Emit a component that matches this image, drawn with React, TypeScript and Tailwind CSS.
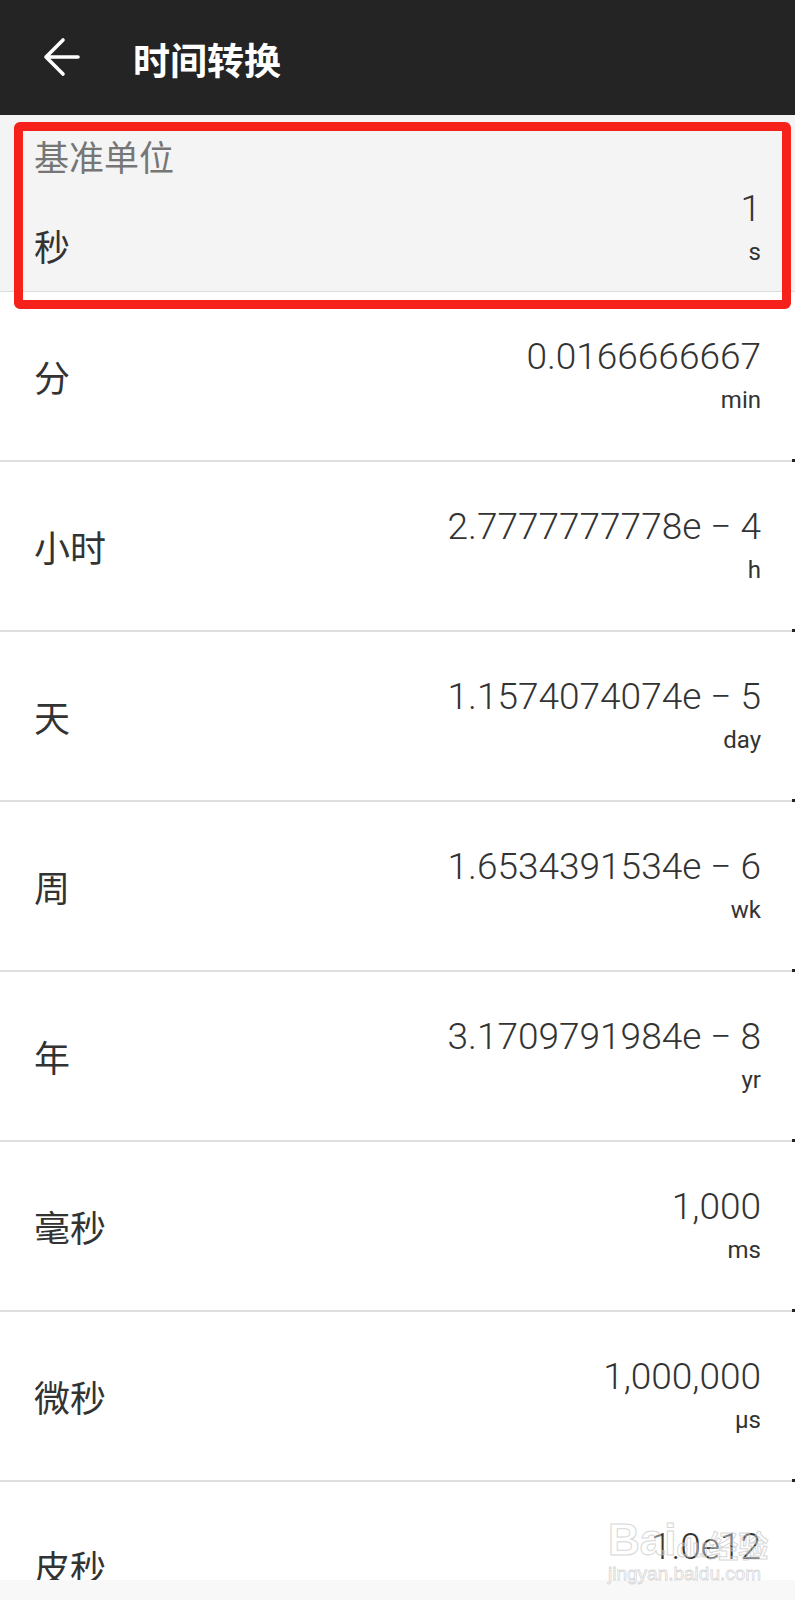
import React from "react";

const rows: { label: string; value: string; unit: string }[] = [
  { label: "分", value: "0.0166666667", unit: "min" },
  { label: "小时", value: "2.7777777778e − 4", unit: "h" },
  { label: "天", value: "1.1574074074e − 5", unit: "day" },
  { label: "周", value: "1.6534391534e − 6", unit: "wk" },
  { label: "年", value: "3.1709791984e − 8", unit: "yr" },
  { label: "毫秒", value: "1,000", unit: "ms" },
  { label: "微秒", value: "1,000,000", unit: "µs" },
  { label: "皮秒", value: "1.0e12", unit: "ps" },
];

const cjk = "font-['Noto_Sans_CJK_SC','Noto_Sans',sans-serif]";
const num = "font-['Roboto','Noto_Sans_CJK_SC',sans-serif]";

function ValueBlock({ value, unit }: { value: string; unit: string }) {
  return (
    <div className={`flex flex-col items-end text-[#333333] ${num}`}>
      <div className="text-[37px] leading-[40px] font-light whitespace-pre">{value}</div>
      <div className="mt-[8px] text-[24px] leading-[30px]">{unit}</div>
    </div>
  );
}

export default function App() {
  return (
    <div className="relative w-[795px] h-[1600px] overflow-hidden bg-white">
      {/* Header */}
      <div className="flex h-[115px] items-center bg-[#242424] pl-[43px] pt-[4px]">
        <svg width="37" height="40" viewBox="0 0 37 40" className="-mt-[6px]" fill="none">
          <path d="M35 20H3M20 3L3 20L20 37" stroke="white" strokeWidth="3.6" strokeLinecap="round" strokeLinejoin="round" />
        </svg>
        <div className={`ml-[53px] text-[37px] leading-[37px] font-bold text-white ${cjk}`}>时间转换</div>
      </div>

      {/* Base unit */}
      <div className="flex h-[177px] flex-col border-b border-[#dcdcdc] bg-[#f4f4f4] pl-[34px] pr-[34px] pt-[23px]">
        <div className={`text-[35px] leading-[35px] text-[#767676] ${cjk}`}>基准单位</div>
        <div className="mt-[16px] flex items-end justify-between">
          <div className={`mb-[4px] text-[36px] leading-[36px] text-[#333333] ${cjk}`}>秒</div>
          <ValueBlock value="1" unit="s" />
        </div>
      </div>

      {/* Rows */}
      {rows.map((r) => (
        <div key={r.label} className="relative flex h-[170px] items-center justify-between border-b-2 border-[#dedede] pl-[34px] pr-[34px]">
          <div className={`text-[36px] leading-[36px] text-[#333333] ${cjk}`}>{r.label}</div>
          <ValueBlock value={r.value} unit={r.unit} />
          <span className="absolute -bottom-[2px] right-0 h-[3px] w-[3px] bg-[#222222]" />
        </div>
      ))}

      {/* Bottom bar */}
      <div className="absolute bottom-0 left-0 h-[20px] w-full bg-[#f8f8f8]" />

      {/* Watermark */}
      <div className="pointer-events-none absolute left-[608px] top-[1516px] flex flex-col items-start opacity-70">
        <div className="flex items-end font-['Liberation_Sans',sans-serif] text-[44px] leading-[48px] font-bold text-[rgba(255,255,255,0.5)] [-webkit-text-stroke:1px_#c8c8c8]">
          <span>Bai</span>
          <span className="text-[26px] leading-[32px]">du</span>
          <span className={`text-[30px] leading-[40px] ${cjk}`}>经验</span>
        </div>
        <div className="font-['Liberation_Sans',sans-serif] text-[19px] leading-[20px] text-[rgba(255,255,255,0.5)] [-webkit-text-stroke:0.8px_#c8c8c8]">
          jingyan.baidu.com
        </div>
      </div>

      {/* Red annotation box */}
      <div className="pointer-events-none absolute left-[14px] top-[122px] h-[187px] w-[777px] rounded-[6px] border-[9px] border-[#f5211a]" />
    </div>
  );
}
